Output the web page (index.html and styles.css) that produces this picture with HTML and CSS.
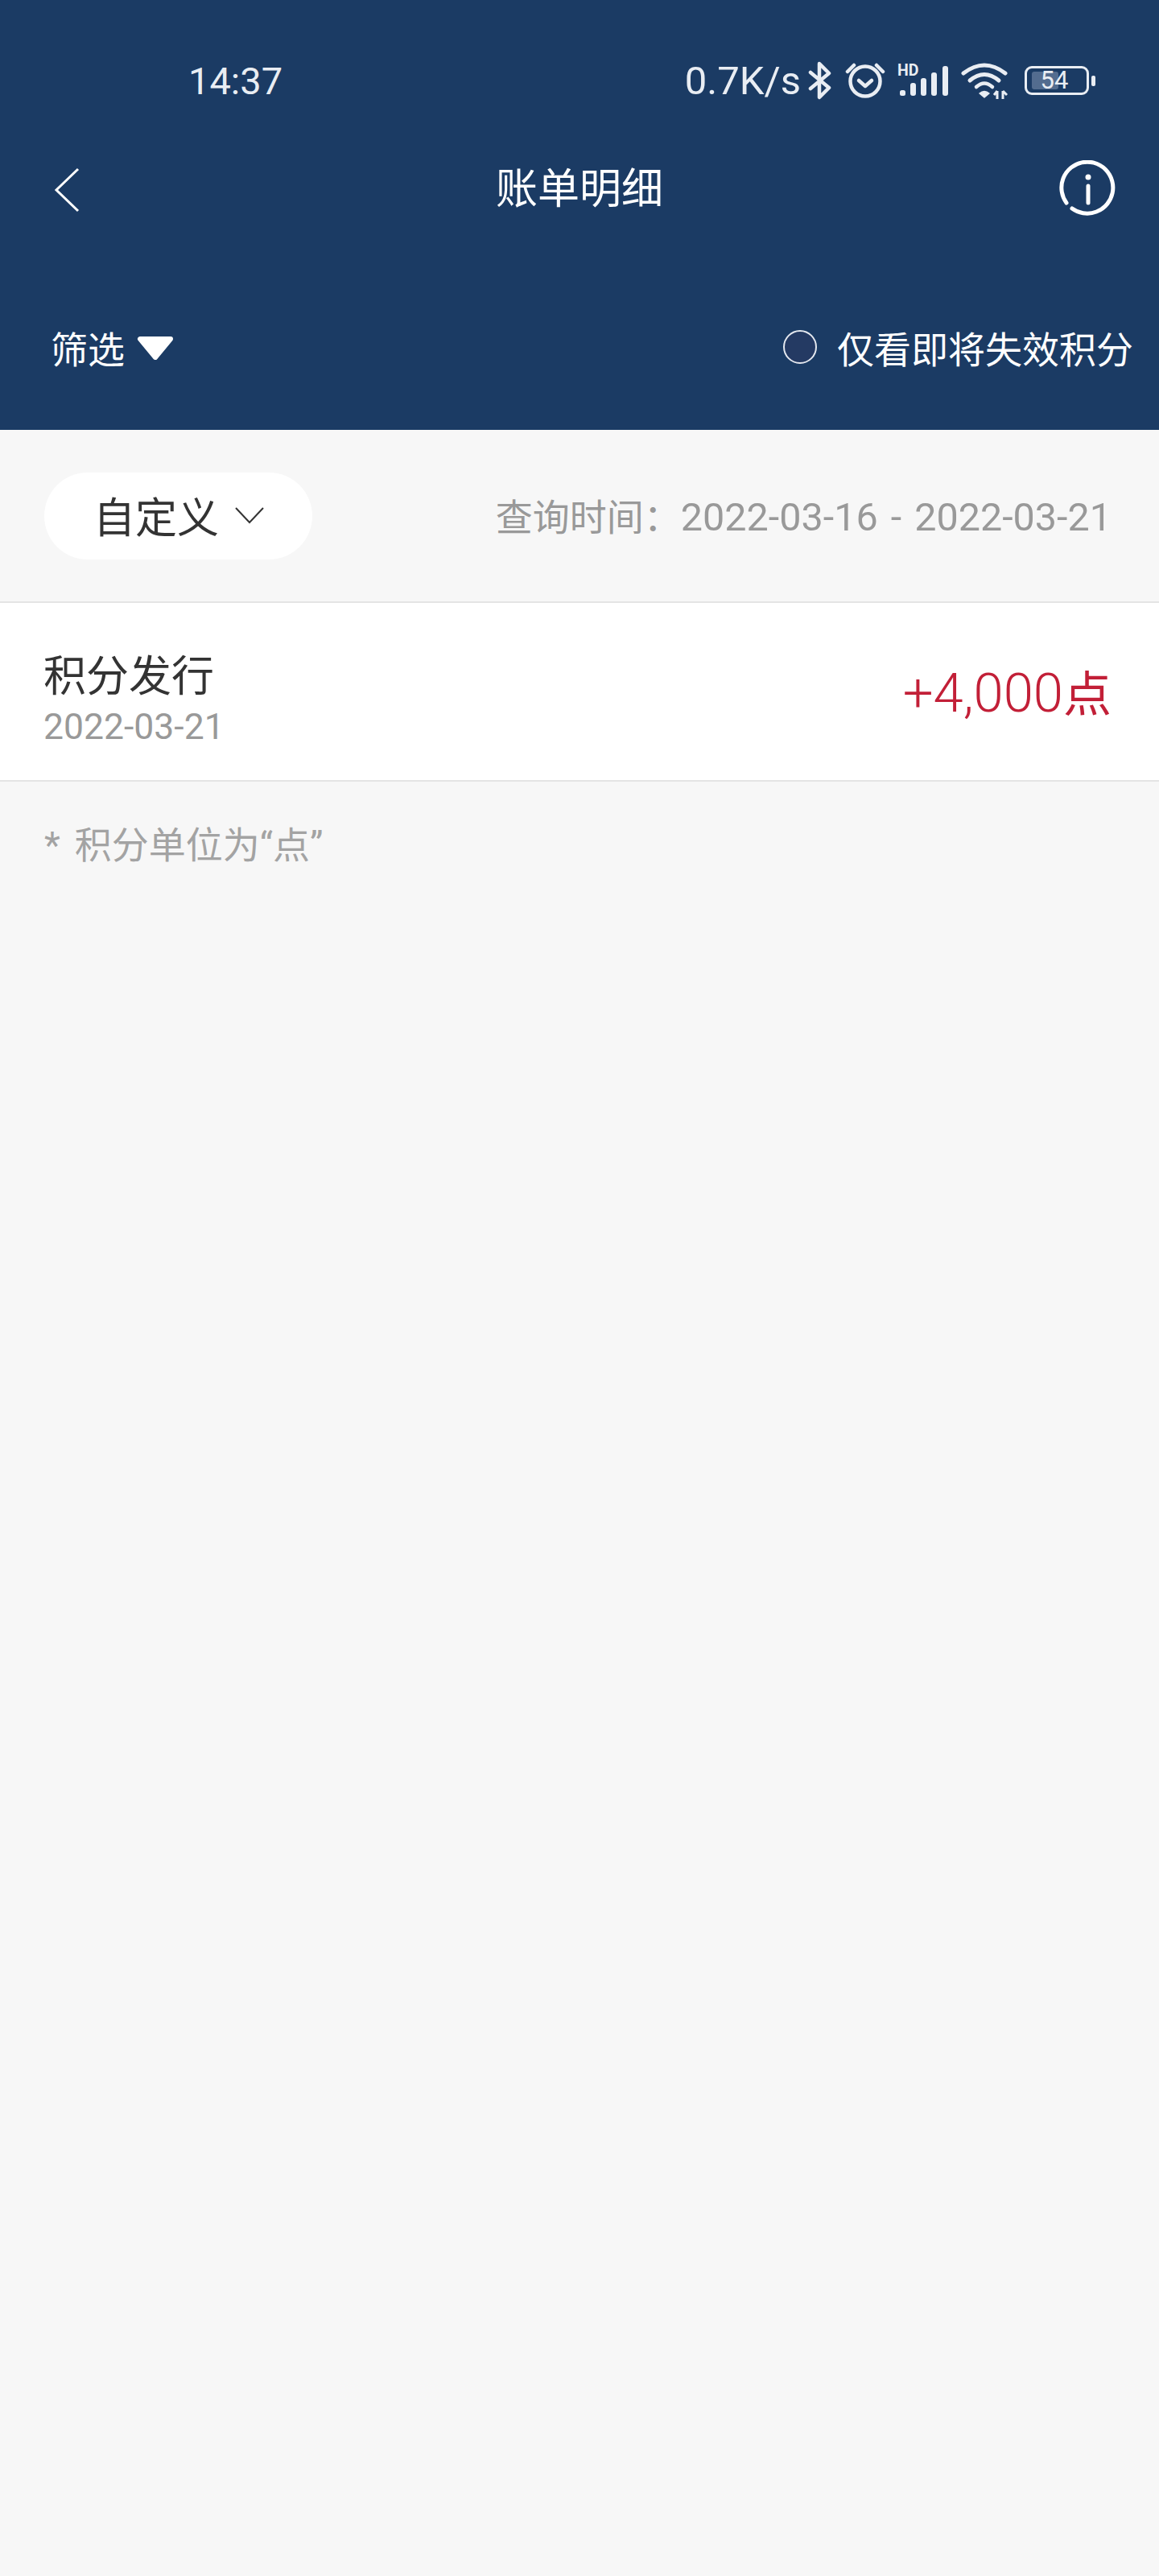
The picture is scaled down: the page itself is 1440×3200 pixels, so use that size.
FILE: index.html
```html
<!DOCTYPE html>
<html lang="zh-CN">
<head>
    <meta charset="UTF-8">
    <meta name="viewport" content="width=device-width, initial-scale=1.0">
    <title>账单明细</title>
    <link rel="stylesheet" href="styles.css">
</head>
<body>
    <header class="header">
        <div class="status-bar">
            <span class="time">14:37</span>
            <div class="status-right">
                <span class="speed">0.7K/s</span>
                <svg class="ic-bt" width="32" height="50" viewBox="0 0 32 50"><path d="M4 15 L27 34 L15 46 L15 4 L27 16 L4 35" fill="none" stroke="#e9edf3" stroke-width="4.5" stroke-linejoin="round" stroke-linecap="round"/></svg>
                <svg class="ic-alarm" width="50" height="50" viewBox="0 0 50 50"><circle cx="25" cy="26" r="18.5" fill="none" stroke="#e9edf3" stroke-width="4.5"/><path d="M17 25 L25 32 L33 25" fill="none" stroke="#e9edf3" stroke-width="4.5" stroke-linecap="round" stroke-linejoin="round"/><path d="M3 14 L11 6 M47 14 L39 6" stroke="#e9edf3" stroke-width="4.5" stroke-linecap="round"/></svg>
                <svg class="ic-signal" width="64" height="50" viewBox="0 0 64 50"><text x="0" y="19" class="hd">HD</text><rect x="3" y="37" width="7" height="7" rx="2.5" fill="#e9edf3"/><rect x="16" y="28" width="7" height="16" rx="3" fill="#e9edf3"/><rect x="29" y="22" width="7" height="22" rx="3" fill="#e9edf3"/><rect x="42" y="15" width="7" height="29" rx="3" fill="#e9edf3"/><rect x="56" y="7" width="7" height="37" rx="3" fill="#e9edf3"/></svg>
                <svg class="ic-wifi" width="60" height="50" viewBox="0 0 60 50"><path d="M3 16 Q29 -4 55 16" fill="none" stroke="#e9edf3" stroke-width="5" stroke-linecap="round"/><path d="M11 25 Q29 10 47 25" fill="none" stroke="#e9edf3" stroke-width="5" stroke-linecap="round"/><path d="M19 33 Q29 24 39 33" fill="none" stroke="#e9edf3" stroke-width="4.5" stroke-linecap="round"/><path d="M23 41 Q29 36 35 41 L29 46 Z" fill="#e9edf3" stroke="#e9edf3" stroke-width="1.5" stroke-linejoin="round"/><path d="M45 48 V38 M41 43 L45 38 M52 38 V48 M52 38 L57 43" fill="none" stroke="#e9edf3" stroke-width="3"/></svg>
                <div class="battery">
                    <div class="battery-body">
                        <div class="battery-fill"></div>
                        <span class="battery-num">54</span>
                    </div>
                    <div class="battery-cap"></div>
                </div>
            </div>
        </div>

        <div class="nav-bar">
            <svg class="back" width="34" height="56" viewBox="0 0 34 56"><path d="M31 2 L4 28 L31 54" fill="none" stroke="#fff" stroke-width="3"/></svg>
            <h1 class="title">账单明细</h1>
            <svg class="info" width="72" height="72" viewBox="0 0 72 72"><path d="M9 53 A32 32 0 1 1 16 60" fill="none" stroke="#fff" stroke-width="5" stroke-linecap="round"/><circle cx="36" cy="21" r="3.5" fill="#fff"/><path d="M36 32 V53" stroke="#fff" stroke-width="5" stroke-linecap="round"/></svg>
        </div>

        <div class="filter-bar">
            <div class="filter">
                <span>筛选</span>
                <svg class="filter-arrow" width="48" height="30" viewBox="0 0 48 30"><path d="M5 4 H43 L24 27 Z" fill="#fff" stroke="#fff" stroke-width="6" stroke-linejoin="round"/></svg>
            </div>
            <div class="expiring">
                <span class="radio"></span>
                <span>仅看即将失效积分</span>
            </div>
        </div>
    </header>

    <section class="query-bar">
        <div class="pill">
            <span>自定义</span>
            <svg width="38" height="22" viewBox="0 0 38 22"><path d="M2 2 L19 20 L36 2" fill="none" stroke="#333" stroke-width="2"/></svg>
        </div>
        <p class="query-time">查询时间：<span class="range">2022-03-16 - 2022-03-21</span></p>
    </section>

    <section class="record">
        <div class="record-left">
            <p class="record-name">积分发行</p>
            <p class="record-date">2022-03-21</p>
        </div>
        <p class="record-amount">+4,000<span class="unit">点</span></p>
    </section>

    <p class="note"><span class="star">*</span>积分单位为“点”</p>
</body>
</html>
```

FILE: styles.css
```css
* {
    box-sizing: border-box;
}

html, body {
    margin: 0;
    padding: 0;
}

body {
    min-height: 3200px;
    background-color: #f7f7f7;
    font-family: Roboto, "Noto Sans CJK SC", sans-serif;
    color: #333;
}

p, h1 {
    margin: 0;
    font-weight: inherit;
}

.header {
    height: 534px;
    padding-top: 70px;
    background-color: #1b3b64;
    color: #fff;
}

.status-bar {
    display: flex;
    justify-content: space-between;
    align-items: center;
    height: 60px;
    padding: 0 79px 0 234px;
    color: #e9edf3;
}

.time {
    font-size: 47px;
}

.status-right {
    display: flex;
    align-items: center;
    gap: 15px;
}

.speed {
    margin-right: -7px;
    font-size: 49px;
}

.hd {
    font-family: Roboto, sans-serif;
    font-size: 19.5px;
    font-weight: 700;
    fill: #e9edf3;
}

.battery {
    display: flex;
    align-items: center;
    gap: 3px;
    margin-left: 4px;
}

.battery-body {
    position: relative;
    width: 80px;
    height: 36px;
    border: 3px solid #e9edf3;
    border-radius: 9px;
    padding-right: 6px;
    text-align: center;
}

.battery-fill {
    position: absolute;
    left: 6px;
    top: 4px;
    bottom: 4px;
    width: 33px;
    background-color: #536c8f;
    border-radius: 3px;
}

.battery-num {
    position: relative;
    display: block;
    font-size: 31px;
    line-height: 30px;
}

.battery-cap {
    width: 5px;
    height: 13px;
    background-color: #e9edf3;
    border-radius: 2px;
}

.nav-bar {
    display: flex;
    justify-content: space-between;
    align-items: center;
    height: 80px;
    margin-top: 66px;
    padding: 0 52px 0 66px;
}

.title {
    margin-left: 24px;
    font-size: 52px;
    line-height: 80px;
}

.info {
    margin-bottom: 3px;
}

.filter-bar {
    display: flex;
    justify-content: space-between;
    align-items: center;
    margin-top: 122px;
    padding: 0 32px 0 63px;
    font-size: 46px;
}

.filter {
    display: flex;
    align-items: center;
    gap: 14px;
}

.filter-arrow {
    margin-bottom: -2px;
}

.expiring {
    display: flex;
    align-items: center;
    gap: 25px;
}

.radio {
    width: 42px;
    height: 42px;
    background-color: #243a63;
    border: 2px solid #e4e8ef;
    border-radius: 50%;
}

.query-bar {
    display: flex;
    justify-content: space-between;
    align-items: center;
    height: 215px;
    padding: 0 59px 0 55px;
    border-bottom: 2px solid #e4e4e4;
}

.pill {
    display: flex;
    align-items: center;
    gap: 19px;
    width: 333px;
    height: 108px;
    padding-left: 61px;
    padding-bottom: 2px;
    background-color: #fff;
    border-radius: 54px;
    font-size: 52px;
}

.query-time {
    margin-bottom: 4px;
    font-size: 46px;
    color: #999;
}

.range {
    font-size: 48.5px;
    word-spacing: 4px;
}

.record {
    display: flex;
    justify-content: space-between;
    align-items: center;
    height: 222px;
    padding: 0 59px 0 54px;
    background-color: #fff;
    border-bottom: 2px solid #e4e4e4;
}

.record-left {
    padding-top: 24px;
}

.record-name {
    font-size: 53px;
    line-height: 64px;
}

.record-date {
    font-size: 44.5px;
    line-height: 60px;
    color: #999;
}

.record-amount {
    margin-bottom: 4px;
    font-size: 67px;
    font-weight: 300;
    color: #c21f37;
}

.unit {
    font-size: 60px;
    font-weight: 400;
}

.note {
    margin-top: 42px;
    padding-left: 55px;
    font-size: 46px;
    color: #a3a3a3;
}

.star {
    margin-right: 18px;
}
```
